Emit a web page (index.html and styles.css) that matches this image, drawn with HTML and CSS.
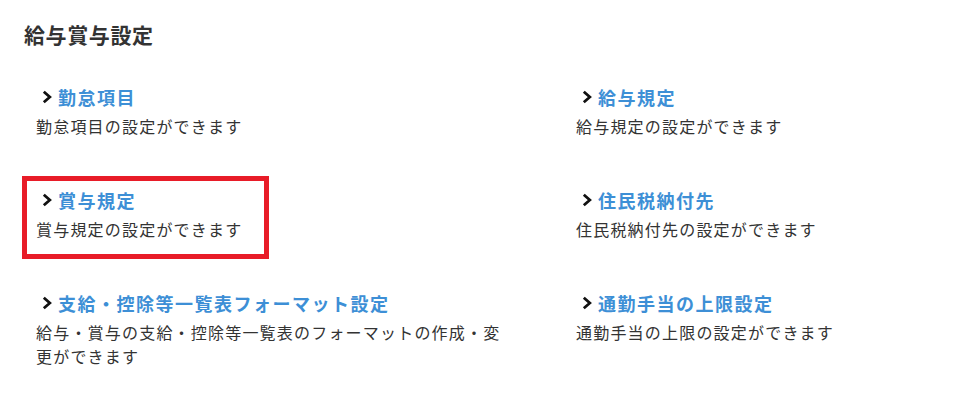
FILE: index.html
```html
<!DOCTYPE html>
<html lang="ja">
<head>
	<meta charset="utf-8">
	<title>給与賞与設定</title>
	<link rel="stylesheet" href="styles.css">
</head>
<body>
	<div class="page">
		<h2 class="title">給与賞与設定</h2>

		<ul class="menu">
			<li class="item">
				<a class="link" href="#"><svg class="chev" width="10" height="14" viewBox="0 0 10 14"><polyline points="1.8,1.8 7.8,7 1.8,12.2"/></svg>勤怠項目</a>
				<p class="desc">勤怠項目の設定ができます</p>
			</li>
			<li class="item">
				<a class="link" href="#"><svg class="chev" width="10" height="14" viewBox="0 0 10 14"><polyline points="1.8,1.8 7.8,7 1.8,12.2"/></svg>給与規定</a>
				<p class="desc">給与規定の設定ができます</p>
			</li>
			<li class="item marked">
				<a class="link" href="#"><svg class="chev" width="10" height="14" viewBox="0 0 10 14"><polyline points="1.8,1.8 7.8,7 1.8,12.2"/></svg>賞与規定</a>
				<p class="desc">賞与規定の設定ができます</p>
			</li>
			<li class="item">
				<a class="link" href="#"><svg class="chev" width="10" height="14" viewBox="0 0 10 14"><polyline points="1.8,1.8 7.8,7 1.8,12.2"/></svg>住民税納付先</a>
				<p class="desc">住民税納付先の設定ができます</p>
			</li>
			<li class="item">
				<a class="link" href="#"><svg class="chev" width="10" height="14" viewBox="0 0 10 14"><polyline points="1.8,1.8 7.8,7 1.8,12.2"/></svg>支給・控除等一覧表フォーマット設定</a>
				<p class="desc">給与・賞与の支給・控除等一覧表のフォーマットの作成・変更ができます</p>
			</li>
			<li class="item">
				<a class="link" href="#"><svg class="chev" width="10" height="14" viewBox="0 0 10 14"><polyline points="1.8,1.8 7.8,7 1.8,12.2"/></svg>通勤手当の上限設定</a>
				<p class="desc">通勤手当の上限の設定ができます</p>
			</li>
		</ul>
	</div>
</body>
</html>
```

FILE: styles.css
```css
body {
	margin:0;
	background:#fff;
	color:#333;
	font-family:"Noto Sans CJK JP", "Noto Sans", sans-serif;
}
.page {
	padding:20px 0 0 24px;
}
.title {
	margin:0;
	font-size:21px;
	line-height:28px;
	font-weight:bold;
	letter-spacing:0.6px;
	color:#333;
}
.menu {
	list-style:none;
	margin:35px 0 0 0;
	padding:0 0 0 12px;
	display:grid;
	grid-template-columns:540px 380px;
	row-gap:48px;
}
.item {
	position:relative;
}
.link {
	display:flex;
	align-items:center;
	gap:6px;
	padding-left:6px;
	font-size:18px;
	line-height:28px;
	font-weight:bold;
	letter-spacing:1.5px;
	color:#3d8fd6;
	text-decoration:none;
}
.chev {
	flex:none;
	margin-top:-1px;
}
.chev polyline {
	fill:none;
	stroke:#111;
	stroke-width:2.8;
}
.desc {
	margin:3px 0 0 0;
	max-width:472px;
	font-size:16px;
	line-height:24px;
	letter-spacing:1.2px;
	color:#333;
}
.marked:after {
	content:'';
	position:absolute;
	top:-10px;
	left:-14px;
	width:247px;
	height:83px;
	box-sizing:border-box;
	border:5px solid #e81c28;
}
```
